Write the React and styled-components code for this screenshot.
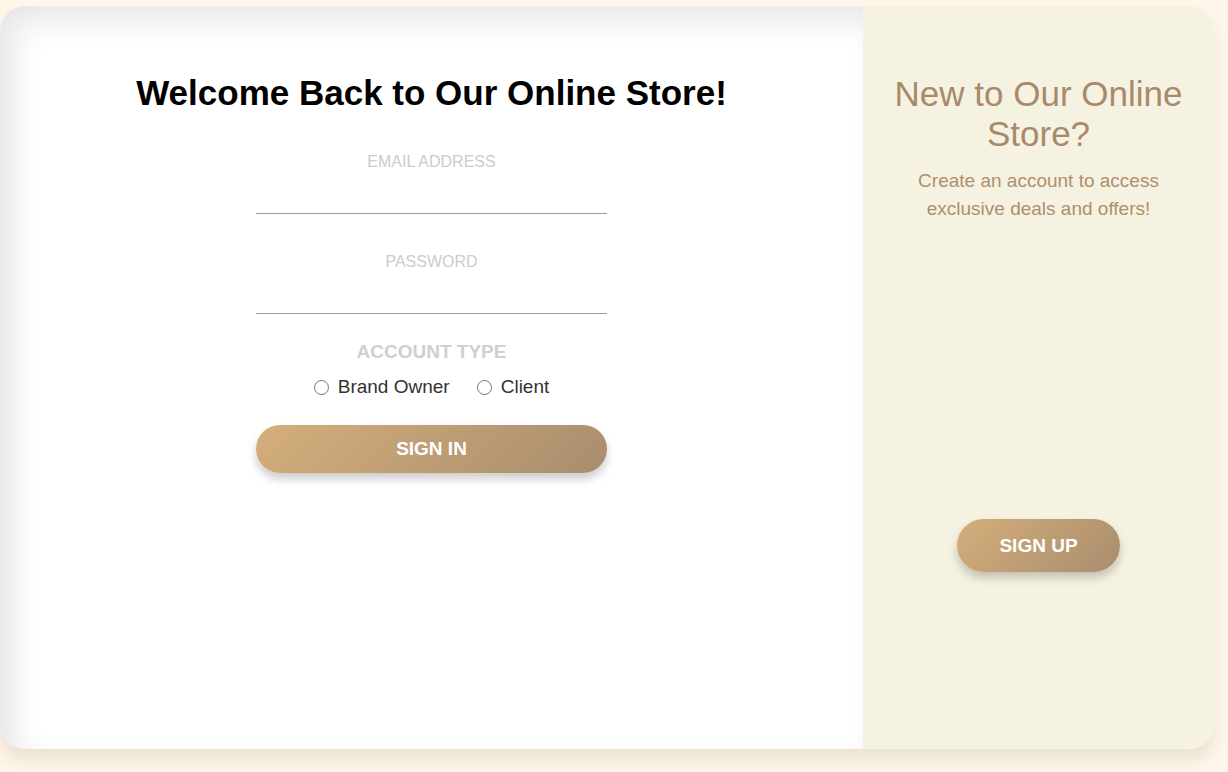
import React from "react";
import styled, { createGlobalStyle } from "styled-components";

const Global = createGlobalStyle`
  html, body { margin: 0; padding: 0; background: #fdf6e9; }
  body { font-family: "Liberation Sans", Arial, sans-serif; }
  * { box-sizing: border-box; }
`;

const Page = styled.div`
  padding-top: 6px;
  height: 772px;
  overflow: hidden;
`;

const Card = styled.div`
  width: 1214px;
  height: 743px;
  display: flex;
  border-radius: 25px;
  overflow: hidden;
  box-shadow: 0 12px 14px rgba(120, 100, 60, 0.12);
`;

const LeftPanel = styled.section`
  width: 863px;
  background: #fff;
  box-shadow: inset 14px 14px 30px rgba(0, 0, 0, 0.1);
  display: flex;
  flex-direction: column;
  align-items: center;
  padding-top: 67px;
`;

const Title = styled.h1`
  margin: 0 0 40px;
  font-size: 35px;
  line-height: 40px;
  font-weight: 700;
  color: #000;
`;

const Form = styled.form`
  width: 351px;
  display: flex;
  flex-direction: column;
  align-items: stretch;
`;

const Field = styled.div`
  display: flex;
  flex-direction: column;
  margin-bottom: ${(p) => p.$gap}px;
`;

const Label = styled.label`
  text-align: center;
  font-size: 16px;
  line-height: 18px;
  color: #cccccc;
`;

const Input = styled.input`
  height: 43px;
  border: none;
  border-bottom: 1px solid #999;
  background: transparent;
  outline: none;
  font-size: 16px;
  font-family: inherit;
`;

const GroupTitle = styled.div`
  text-align: center;
  font-weight: 700;
  font-size: 19px;
  line-height: 21px;
  color: #cfcfcf;
`;

const RadioRow = styled.div`
  display: flex;
  justify-content: center;
  gap: 27px;
  margin-top: 14px;
  margin-bottom: 27px;
`;

const RadioLabel = styled.label`
  display: flex;
  align-items: center;
  font-size: 19px;
  line-height: 22px;
  color: #333;
  input {
    width: 15px;
    height: 15px;
    margin: 0 9px 0 0;
    accent-color: #a88d6f;
  }
`;

const Button = styled.button`
  border: none;
  border-radius: 30px;
  background: linear-gradient(135deg, #d5ae7b 0%, #a88d6e 100%);
  color: #fff;
  font-family: inherit;
  font-weight: 700;
  font-size: 19px;
  text-transform: uppercase;
  box-shadow: 0 6px 10px rgba(0, 0, 0, 0.2);
  cursor: pointer;
  height: ${(p) => p.$h}px;
  padding: 0 ${(p) => p.$px}px;
`;

const RightPanel = styled.section`
  flex: 1;
  background: #f6f2e2;
  display: flex;
  flex-direction: column;
  align-items: center;
  padding: 68px 28px 0;
  text-align: center;
  color: #a98b6b;
`;

const SideTitle = styled.h2`
  margin: 0 0 13px;
  font-size: 35px;
  line-height: 40px;
  font-weight: 400;
  color: #a88a6a;
`;

const SideText = styled.p`
  margin: 0 0 296px;
  font-size: 19px;
  line-height: 28px;
  color: #ae8f6c;
`;

export default function App() {
  return (
    <>
      <Global />
      <Page>
        <Card>
          <LeftPanel>
            <Title>Welcome Back to Our Online Store!</Title>
            <Form onSubmit={(e) => e.preventDefault()}>
              <Field $gap={39}>
                <Label htmlFor="email">EMAIL ADDRESS</Label>
                <Input id="email" type="email" />
              </Field>
              <Field $gap={27}>
                <Label htmlFor="password">PASSWORD</Label>
                <Input id="password" type="password" />
              </Field>
              <GroupTitle>ACCOUNT TYPE</GroupTitle>
              <RadioRow>
                <RadioLabel>
                  <input type="radio" name="type" />
                  Brand Owner
                </RadioLabel>
                <RadioLabel>
                  <input type="radio" name="type" />
                  Client
                </RadioLabel>
              </RadioRow>
              <Button type="submit" $h={48} $px={0}>Sign In</Button>
            </Form>
          </LeftPanel>
          <RightPanel>
            <SideTitle>New to Our Online Store?</SideTitle>
            <SideText>Create an account to access exclusive deals and offers!</SideText>
            <Button type="button" $h={53} $px={42}>Sign Up</Button>
          </RightPanel>
        </Card>
      </Page>
    </>
  );
}
